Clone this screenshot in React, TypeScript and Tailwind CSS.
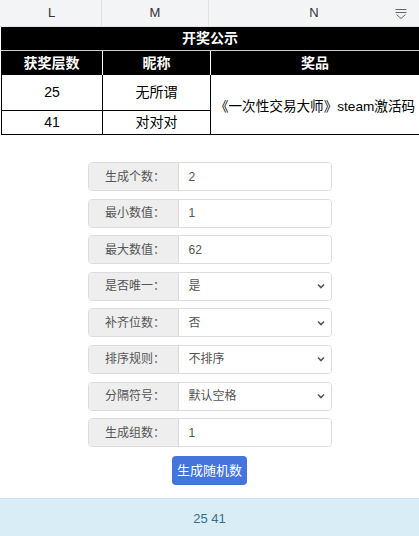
import React from 'react';

const font = { fontFamily: '"Liberation Sans", "Noto Sans CJK SC", sans-serif' };

const fields = [
  { label: '生成个数：', value: '2' },
  { label: '最小数值：', value: '1' },
  { label: '最大数值：', value: '62' },
  { label: '是否唯一：', value: '是', select: true },
  { label: '补齐位数：', value: '否', select: true },
  { label: '排序规则：', value: '不排序', select: true },
  { label: '分隔符号：', value: '默认空格', select: true },
  { label: '生成组数：', value: '1' },
];

const FilterIcon = () => (
  <svg width="12" height="11" viewBox="0 0 12 11" fill="none" stroke="#666" strokeWidth="1">
    <path d="M0.5 0.5h11" />
    <path d="M0.5 3.5h11" />
    <path d="M1.5 5.5l4.5 4 4.5-4" />
  </svg>
);

const Chevron = () => (
  <svg width="8" height="6" viewBox="0 0 8 6" fill="none" stroke="#555" strokeWidth="1.6">
    <path d="M1 1.5l3 3 3-3" />
  </svg>
);

const App: React.FC = () => {
  return (
    <div className="w-[419px] h-[536px] bg-white overflow-hidden" style={font}>
      {/* sheet column header */}
      <div className="h-[27px] bg-[#f3f4f6] flex text-[13px] text-[#333] border-b border-[#e5e5e5]">
        <div className="w-[2px]" />
        <div className="w-[100px] flex items-center justify-center border-r border-[#e2e2e2]">L</div>
        <div className="w-[107px] flex items-center justify-center border-r border-[#e2e2e2]">M</div>
        <div className="flex-1 flex items-center justify-center relative">
          N
          <span className="absolute right-[12px] top-[9px]">
            <FilterIcon />
          </span>
        </div>
      </div>

      {/* prize table */}
      <div className="pl-[1px]">
        <div className="h-[23px] bg-black text-white font-bold text-[14px] flex items-center justify-center">
          开奖公示
        </div>
        <div className="h-px bg-[#d0d0d0]" />
        <div className="grid grid-cols-[101px_107px_1fr] gap-x-px bg-white h-[24px]">
          <div className="bg-black text-white font-bold text-[14px] flex items-center justify-center">获奖层数</div>
          <div className="bg-black text-white font-bold text-[14px] flex items-center justify-center">昵称</div>
          <div className="bg-black text-white font-bold text-[14px] flex items-center justify-center">奖品</div>
        </div>
        <div className="grid grid-cols-[100px_107px_1fr] grid-rows-[35px_23px] gap-px bg-black border-l border-b border-black text-[14px] text-black">
          <div className="bg-white flex items-center justify-center">25</div>
          <div className="bg-white flex items-center justify-center">无所谓</div>
          <div className="bg-white row-span-2 flex items-center justify-center pt-[6px] text-[13.6px] whitespace-nowrap">
            《一次性交易大师》steam激活码
          </div>
          <div className="bg-white flex items-center justify-center">41</div>
          <div className="bg-white flex items-center justify-center">对对对</div>
        </div>
      </div>

      {/* random generator form */}
      <div className="w-[244px] mx-auto mt-[27px] flex flex-col gap-[7.6px] text-[12px] text-[#555]">
        {fields.map((f) => (
          <div key={f.label} className="flex h-[29px] border border-[#dcdcdc] rounded-[4px] overflow-hidden">
            <div className="w-[90px] shrink-0 bg-[#eeeeee] border-r border-[#dcdcdc] flex items-center justify-center pl-[4px]">
              {f.label}
            </div>
            <div className="flex-1 flex items-center justify-between pl-[10px] pr-[6px] bg-white">
              <span>{f.value}</span>
              {f.select && <Chevron />}
            </div>
          </div>
        ))}
      </div>
      <div className="flex justify-center mt-[9px]">
        <button className="w-[75px] h-[29px] rounded-[4px] bg-[#4574dc] text-white text-[13px]">生成随机数</button>
      </div>

      <div className="mt-[13px] h-[40px] bg-[#d9edf7] border-t border-[#c4e3f3] flex items-center justify-center text-[13px] text-[#31708f]">
        25 41
      </div>
    </div>
  );
};

export default App;
